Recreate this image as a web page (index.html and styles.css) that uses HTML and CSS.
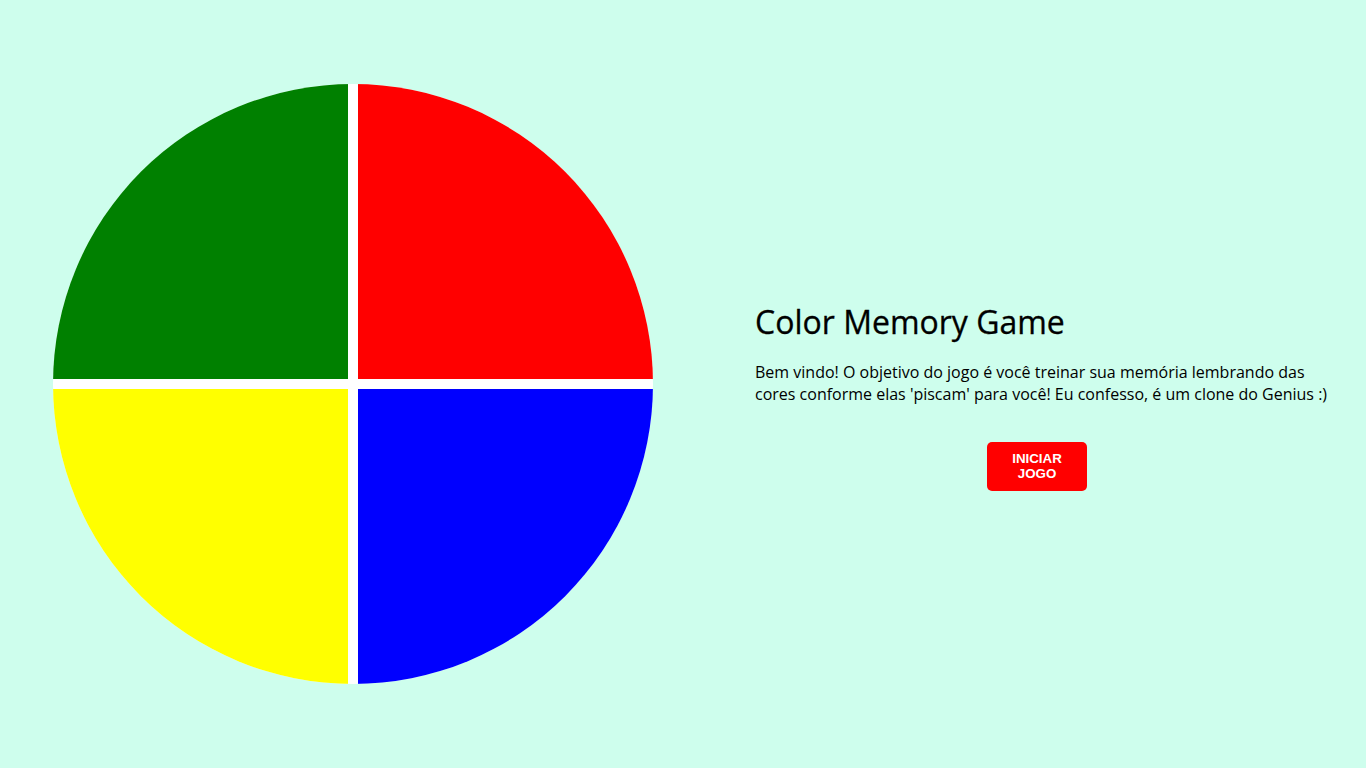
FILE: index.html
```html
<!DOCTYPE html>
<html lang="pt-BR">
<head>
<meta charset="utf-8">
<title>Color Memory Game</title>
<link rel="stylesheet" href="styles.css">
</head>
<body>
<main class="page">
  <div class="board">
    <div class="pad pad-green"></div>
    <div class="pad pad-red"></div>
    <div class="pad pad-yellow"></div>
    <div class="pad pad-blue"></div>
  </div>
  <section class="info">
    <h1 class="title">Color Memory Game</h1>
    <p class="desc">Bem vindo! O objetivo do jogo é você treinar sua memória lembrando das cores conforme elas 'piscam' para você! Eu confesso, é um clone do Genius :)</p>
    <div class="actions">
      <button class="start">INICIAR JOGO</button>
    </div>
  </section>
</main>
</body>
</html>
```

FILE: styles.css
```css
html, body {
  margin: 0;
  padding: 0;
}
body {
  background: #cefeed;
  font-family: "Open Sans", "Noto Sans", sans-serif;
  color: #000;
}
.page {
  height: 100vh;
  display: flex;
  align-items: center;
  padding-left: 53px;
  gap: 102px;
  box-sizing: border-box;
}
.board {
  width: 600px;
  height: 600px;
  flex: none;
  border-radius: 50%;
  overflow: hidden;
  background: #fff;
  display: grid;
  grid-template-columns: 295px 295px;
  grid-template-rows: 295px 295px;
  column-gap: 10px;
  row-gap: 10px;
}
.pad-green { background: #008000; }
.pad-red { background: #ff0000; }
.pad-yellow { background: #ffff00; }
.pad-blue { background: #0000ff; }
.info {
  width: 580px;
  margin-top: 22px;
}
.title {
  font-size: 32px;
  font-weight: 500;
  margin: 0 0 17px;
  line-height: 44px;
  -webkit-text-stroke: 0.3px #000;
}
.desc {
  font-size: 16px;
  line-height: 22px;
  margin: 0;
}
.actions {
  width: 564px;
  display: flex;
  justify-content: center;
  margin-top: 37px;
}
.start {
  width: 100px;
  height: 49px;
  border: none;
  border-radius: 5px;
  background: #ff0000;
  color: #fff;
  font-family: "Liberation Sans", Arial, sans-serif;
  font-weight: 700;
  font-size: 13.333px;
  line-height: 15px;
  padding: 0 16px;
  cursor: pointer;
}
```
